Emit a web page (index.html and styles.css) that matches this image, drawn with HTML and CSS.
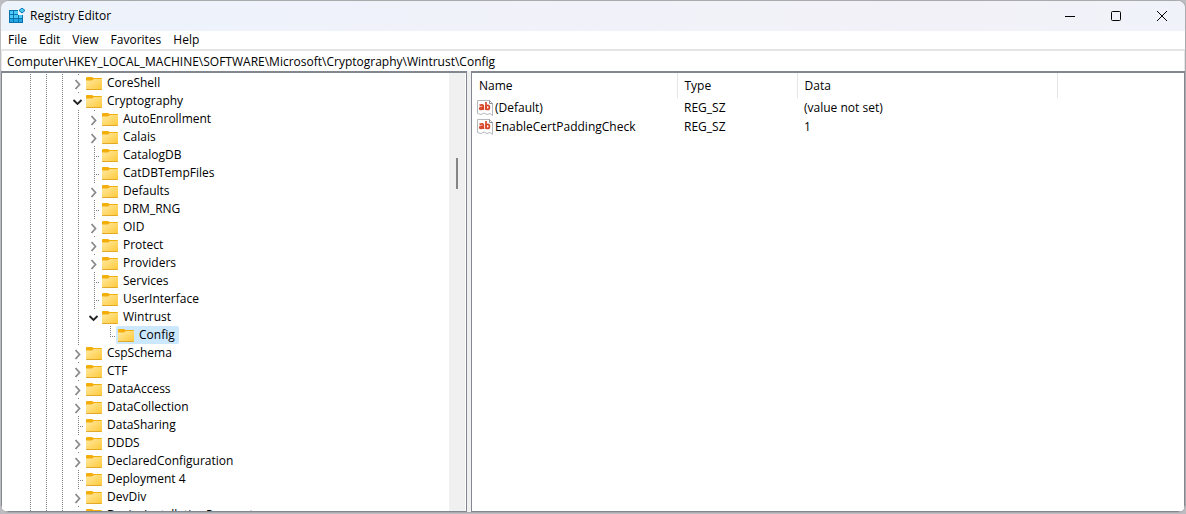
FILE: index.html
```html
<!DOCTYPE html>
<html lang="en">
<head>
<meta charset="utf-8">
<title>Registry Editor</title>
<link rel="stylesheet" href="styles.css">
</head>
<body>
<svg class="defs" aria-hidden="true">
  <defs>
    <linearGradient id="paper" x1="0" y1="0" x2="1" y2="1"><stop offset="0" stop-color="#ffe9a2"/><stop offset="1" stop-color="#ffc937"/></linearGradient>
    <symbol id="folder" viewBox="0 0 16 16">
      <path d="M0 3Q0 2 1 2H6L7.500 3H15Q16 3 16 4V8H0Z" fill="#f3ae0c"/>
      <path d="M0 5.500H6L8 4H16V14Q16 15 15 15H1Q0 15 0 14Z" fill="url(#paper)"/>
      <path d="M0 14Q0 15 1 15H15Q16 15 16 14Z" fill="#e5a92a"/>
    </symbol>
    <symbol id="right" viewBox="0 0 16 18"><path d="M7.500 6L11.500 10.500L7.500 15" fill="none" stroke="#8a8a8a" stroke-width="1.800"/></symbol>
    <symbol id="down" viewBox="0 0 16 18"><path d="M5.500 8L9.500 12L13.500 8" fill="none" stroke="#222" stroke-width="1.800"/></symbol>
    <symbol id="string" viewBox="0 0 16 16">
      <path d="M.5.500H12.500L15.500 3.500V15.500L13 13.500L10 14.500L7 13L4 14.500L.5 13.500Z" fill="#fff" stroke="#b4b8bc"/>
      <path d="M12.500.5V3.500H15.500" fill="none" stroke="#8b8f94"/>
      <g fill="none" stroke="#d9472b" stroke-width="1.700"><path d="M2.500 5.400Q6.300 3.800 6.300 6.500V10M6.300 7.400Q2.500 7 2.700 8.600Q3.300 10.200 6.300 8.600"/><path d="M9 2V10"/><ellipse cx="10.700" cy="7.400" rx="1.700" ry="2"/></g>
    </symbol>
  </defs>
</svg>
<div class="window">
  <header class="titlebar">
    <svg class="app-icon" viewBox="0 0 16 16" aria-hidden="true">
      <path d="M0 2H9V7H14V15H0Z" fill="#0873b0"/>
      <path d="M1 3H4V6H1ZM5 3H9V6H5ZM1 7H4V10H1ZM5 7H9V10H5ZM10 7H13V10H10Z" fill="#4cc9f5"/>
      <path d="M1 11H4V14H1ZM5 11H9V14H5ZM10 11H13V14H10Z" fill="#24a6e0"/>
      <path d="M13 0L16 2.500L13 5L10 2.500Z" fill="#4cc9f5" stroke="#0873b0"/>
    </svg>
    <h1 class="title">Registry Editor</h1>
    <div class="captions">
      <button class="caption" aria-label="Minimize"><svg viewBox="0 0 12 12"><path d="M1 6.500H11"/></svg></button>
      <button class="caption" aria-label="Maximize"><svg viewBox="0 0 12 12"><rect x="1.500" y="1.500" width="9" height="9" rx="1"/></svg></button>
      <button class="caption" aria-label="Close"><svg viewBox="0 0 12 12"><path d="M1 1L11 11M11 1L1 11"/></svg></button>
    </div>
  </header>
  <nav class="menu" aria-label="Main">
    <button>File</button><button>Edit</button><button>View</button><button>Favorites</button><button>Help</button>
  </nav>
  <input class="address" type="text" aria-label="Address" spellcheck="false" value="Computer\HKEY_LOCAL_MACHINE\SOFTWARE\Microsoft\Cryptography\Wintrust\Config">
  <main class="panes">
    <section class="tree-pane">
      <ul class="tree" role="tree" aria-label="Registry keys"></ul>
      <div class="scrollbar"><div class="thumb"></div></div>
    </section>
    <section class="value-pane">
      <table class="values">
        <colgroup><col class="col-name"><col class="col-type"><col class="col-data"><col></colgroup>
        <thead><tr><th>Name</th><th>Type</th><th>Data</th><td></td></tr></thead>
        <tbody>
          <tr><td><span class="value-name"><svg><use href="#string"/></svg>(Default)</span></td><td>REG_SZ</td><td>(value not set)</td><td></td></tr>
          <tr><td><span class="value-name"><svg><use href="#string"/></svg>EnableCertPaddingCheck</span></td><td>REG_SZ</td><td>1</td><td></td></tr>
        </tbody>
      </table>
    </section>
  </main>
</div>
<script src="tree.js"></script>
</body>
</html>
```
FILE: tree.js
```js
// [name, depth below SOFTWARE\Microsoft, state]
const keys = [
  ["CoreShell", 0, "closed"], ["Cryptography", 0, "open"],
  ["AutoEnrollment", 1, "closed"], ["Calais", 1, "closed"],
  ["CatalogDB", 1, "leaf"], ["CatDBTempFiles", 1, "leaf"],
  ["Defaults", 1, "closed"], ["DRM_RNG", 1, "leaf"],
  ["OID", 1, "closed"], ["Protect", 1, "closed"],
  ["Providers", 1, "closed"], ["Services", 1, "leaf"],
  ["UserInterface", 1, "leaf"], ["Wintrust", 1, "open"],
  ["Config", 2, "selected"],
  ["CspSchema", 0, "closed"], ["CTF", 0, "closed"],
  ["DataAccess", 0, "closed"], ["DataCollection", 0, "closed"],
  ["DataSharing", 0, "leaf"], ["DDDS", 0, "closed"],
  ["DeclaredConfiguration", 0, "closed"], ["Deployment 4", 0, "leaf"],
  ["DevDiv", 0, "closed"], ["DeviceInstallationParameters", 0, "closed"]
];

const row = ([name, depth, state]) => {
  const guides = '<span class="guide line"></span>'.repeat(depth ? 4 : 3) +
    (depth === 2 ? '<span class="guide"></span>' : "");
  const toggle = state === "open" || state === "closed"
    ? `<button class="toggle" aria-label="Toggle ${name}"><svg><use href="#${state === "open" ? "down" : "right"}"/></svg></button>`
    : `<span class="guide ${state === "selected" ? "last" : "line"} branch"></span>`;
  return `<li class="row" role="treeitem">${guides}${toggle}<span class="key ${state}"><svg><use href="#folder"/></svg>${name}</span></li>`;
};

document.querySelector(".tree").innerHTML = keys.map(row).join("");
```
FILE: styles.css
```css
* { box-sizing: border-box; }
body {
  margin: 0;
  height: 100vh;
  padding: 0 0 1px 1px;
  overflow: hidden;
  background: #bdbdc1;
  color: #000;
  font: 12px/18px "Open Sans", "Noto Sans", sans-serif;
}
button, input { font: inherit; color: inherit; border: 0; padding: 0; background: none; }
.defs { position: absolute; width: 0; height: 0; }
.window {
  height: 100%;
  display: flex;
  flex-direction: column;
  border: 1px solid #aaabad;
  border-left-width: 0;
  border-radius: 8px;
  overflow: hidden;
  background: #f0f0f0;
}
.titlebar {
  flex: none;
  height: 30px;
  display: flex;
  align-items: center;
  padding-left: 8px;
  background: linear-gradient(90deg, #edf3fb, #f3f1f8 80%, #eff3f9);
}
.app-icon { width: 16px; height: 16px; }
.title { margin: 0 0 0 5px; font-size: 12px; font-weight: 400; }
.captions { margin-left: auto; display: flex; height: 100%; }
.caption { width: 46px; display: grid; place-items: center; }
.caption svg { width: 12px; height: 12px; fill: none; stroke: #000; stroke-width: 1; }
.menu {
  flex: none;
  height: 18px;
  display: flex;
  gap: 12px;
  padding-left: 7px;
  background: #fff;
}
.address {
  flex: none;
  width: 100%;
  height: 22px;
  padding: 0 5px;
  border: solid #e5e5e5;
  border-width: 2px 1px 0;
  background: #fff;
}
.panes { flex: 1; min-height: 0; display: flex; gap: 4px; }
.tree-pane, .value-pane { border: 1px solid #828790; border-top-width: 2px; background: #fff; overflow: hidden; }
.tree-pane { flex: none; width: 466px; display: flex; padding-right: 1px; }
.value-pane { flex: 1; }
.tree { flex: 1; margin: 0; padding: 1px 0 0 18px; list-style: none; }
.row { display: flex; height: 18px; }
.guide, .toggle { flex: none; width: 16px; height: 18px; }
.line, .last, .toggle {
  background: repeating-linear-gradient(#808080 0 1px, transparent 1px 2px) 10px 0 / 1px 18px no-repeat;
}
.last { background-size: 1px 10px; }
.toggle { background-size: 1px 2px; }
.toggle svg { display: block; width: 16px; height: 18px; }
.branch { display: flex; align-items: flex-end; padding: 0 0 7px 10px; }
.branch::after {
  content: "";
  width: 100%;
  height: 1px;
  background: repeating-linear-gradient(90deg, #808080 0 1px, transparent 1px 2px);
}
.key { display: flex; align-items: center; gap: 5px; padding: 0 4px 0 2px; white-space: nowrap; }
.key svg { flex: none; width: 16px; height: 16px; }
.selected { background: #cce8ff; border-radius: 2px; }
.scrollbar { flex: none; width: 16px; padding: 85px 0 0 7px; background: #f0f0f0; }
.thumb { width: 2px; height: 31px; background: #858585; }
.values { width: 100%; table-layout: fixed; border-collapse: collapse; }
.values th, .values td { padding: 0 7px; height: 19px; text-align: left; font-weight: 400; white-space: nowrap; }
.values td:first-child { padding-left: 5px; }
.values thead th { height: 25px; border-right: 1px solid #e5e5e5; }
.col-name { width: 205px; }
.col-type { width: 120px; }
.col-data { width: 260px; }
.value-name { display: flex; align-items: center; gap: 2px; }
.value-name svg { flex: none; width: 16px; height: 16px; }
```
